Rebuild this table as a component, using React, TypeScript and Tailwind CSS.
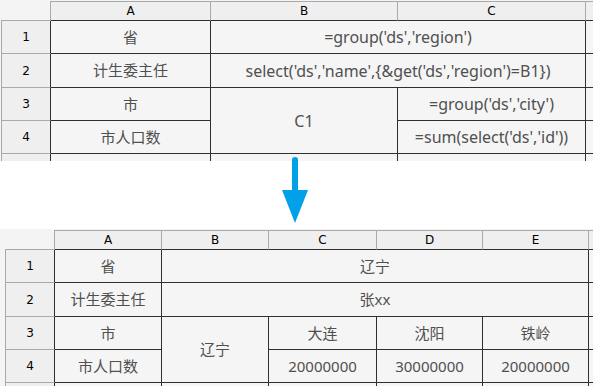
import type { ReactNode } from 'react'

const cellFont = { fontFamily: '"Noto Sans", "Noto Sans CJK SC", sans-serif' }
const headFont = { fontFamily: '"DejaVu Sans", sans-serif' }

type CellProps = { children?: ReactNode; className?: string }

const Corner = ({ className = '' }: CellProps) => (
    <div className={`bg-[#f4f4f4] border-r border-b border-[#a9a9a9] ${className}`} />
)

const ColHead = ({ children, className = '' }: CellProps) => (
    <div
        className={`flex items-center justify-center bg-[#efefef] border-t border-r border-t-[#a9a9a9] border-r-[#a9a9a9] border-b border-b-[#2f2f2f] text-[12px] text-black ${className}`}
        style={headFont}
    >
        {children}
    </div>
)

const RowHead = ({ children, className = '' }: CellProps) => (
    <div
        className={`flex items-center justify-center bg-[#efefef] border-l border-b border-l-[#a9a9a9] border-b-[#a9a9a9] border-r border-r-[#2f2f2f] text-[12px] text-black ${className}`}
        style={headFont}
    >
        {children}
    </div>
)

// formula cells use a slightly larger size, matching the wider latin face in the shot
const Cell = ({ children, className = 'text-[15px]' }: CellProps) => (
    <div
        className={`flex items-center justify-center whitespace-nowrap bg-[#f5f5f5] border-r border-b border-[#2f2f2f] text-[#505050] ${className}`}
        style={cellFont}
    >
        {children}
    </div>
)

const TemplateSheet = () => (
    <div className="h-[161px] w-[593px] overflow-hidden bg-[#f4f4f4] pl-px pt-px">
        <div className="grid grid-cols-[50px_160px_187px_188px_120px] grid-rows-[20px_33px_34px_33px_33px_33px]">
            <Corner />
            <ColHead>A</ColHead>
            <ColHead>B</ColHead>
            <ColHead>C</ColHead>
            <ColHead />

            <RowHead>1</RowHead>
            <Cell>省</Cell>
            <Cell className="col-span-2 text-[16px]">=group('ds','region')</Cell>
            <Cell />

            <RowHead>2</RowHead>
            <Cell>计生委主任</Cell>
            <Cell className="col-span-2 text-[16px]">select('ds','name',{'{'}&amp;get('ds','region')=B1{'}'})</Cell>
            <Cell />

            <RowHead>3</RowHead>
            <Cell>市</Cell>
            <Cell className="row-span-2 text-[16px]">C1</Cell>
            <Cell className="text-[16px]">=group('ds','city')</Cell>
            <Cell />

            <RowHead>4</RowHead>
            <Cell>市人口数</Cell>
            <Cell className="text-[16px]">=sum(select('ds','id'))</Cell>
            <Cell />

            <RowHead />
            <Cell />
            <Cell />
            <Cell />
            <Cell />
        </div>
    </div>
)

const ResultSheet = () => (
    <div className="h-[157px] w-[593px] overflow-hidden bg-[#f4f4f4] pl-[5px] pt-px">
        <div className="grid grid-cols-[50px_107px_107px_108px_106px_106px_100px] grid-rows-[20px_33px_34px_33px_33px_33px]">
            <Corner />
            <ColHead>A</ColHead>
            <ColHead>B</ColHead>
            <ColHead>C</ColHead>
            <ColHead>D</ColHead>
            <ColHead>E</ColHead>
            <ColHead />

            <RowHead>1</RowHead>
            <Cell>省</Cell>
            <Cell className="col-span-4 text-[15px]">辽宁</Cell>
            <Cell />

            <RowHead>2</RowHead>
            <Cell>计生委主任</Cell>
            <Cell className="col-span-4 text-[15px]">张xx</Cell>
            <Cell />

            <RowHead>3</RowHead>
            <Cell>市</Cell>
            <Cell className="row-span-2 text-[15px]">辽宁</Cell>
            <Cell>大连</Cell>
            <Cell>沈阳</Cell>
            <Cell>铁岭</Cell>
            <Cell />

            <RowHead>4</RowHead>
            <Cell>市人口数</Cell>
            <Cell>20000000</Cell>
            <Cell>30000000</Cell>
            <Cell>20000000</Cell>
            <Cell />

            <RowHead />
            <Cell />
            <Cell />
            <Cell />
            <Cell />
            <Cell />
            <Cell />
        </div>
    </div>
)

const DownArrow = () => (
    <svg width="28" height="66" viewBox="0 0 28 66" className="relative -mt-[4px]">
        <line x1="14" y1="3" x2="14" y2="36" stroke="#00a1e8" strokeWidth="6" strokeLinecap="round" />
        <polygon points="1,33 27,33 14,66" fill="#00a1e8" />
    </svg>
)

const App = () => {
    return (
        <div className="h-[386px] w-[593px] overflow-hidden bg-white">
            <TemplateSheet />
            <div className="flex h-[68px] pl-[281px]">
                <DownArrow />
            </div>
            <ResultSheet />
        </div>
    )
}

export default App
